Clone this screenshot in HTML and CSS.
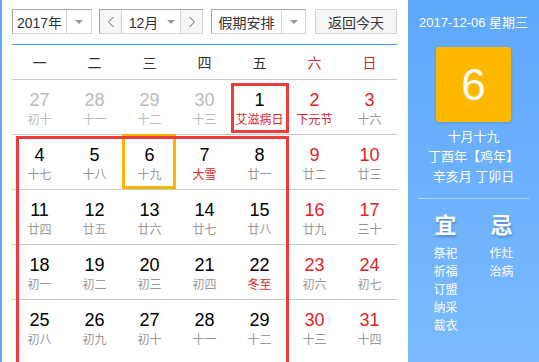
FILE: index.html
```html
<!DOCTYPE html>
<html lang="zh">
<head>
    <meta charset="UTF-8">
    <title>万年历</title>
    <link rel="stylesheet" href="styles.css">
</head>
<body>
    <div class="page">
        <div class="calendar">
            <div class="toolbar">
                <div class="select year-select">
                    <span class="select-text">2017年</span>
                    <span class="select-arrow"><i class="caret"></i></span>
                </div>
                <div class="select month-select">
                    <span class="nav-btn">
                        <svg width="8" height="12" viewBox="0 0 8 12"><path d="M6.5 1 L1.5 6 L6.5 11" fill="none" stroke="#666" stroke-width="1"/></svg>
                    </span>
                    <span class="select-text month-text">12月<i class="caret"></i></span>
                    <span class="nav-btn next">
                        <svg width="8" height="12" viewBox="0 0 8 12"><path d="M1.5 1 L6.5 6 L1.5 11" fill="none" stroke="#666" stroke-width="1"/></svg>
                    </span>
                </div>
                <div class="select holiday-select">
                    <span class="select-text">假期安排</span>
                    <span class="select-arrow"><i class="caret"></i></span>
                </div>
                <div class="today-btn">返回今天</div>
            </div>

            <div class="week-head">
                <span>一</span>
                <span>二</span>
                <span>三</span>
                <span>四</span>
                <span>五</span>
                <span class="weekend">六</span>
                <span class="weekend">日</span>
            </div>

            <div class="days" id="days"></div>

            <div class="mark mark-small"></div>
            <div class="mark mark-big"></div>
        </div>

        <aside class="today-panel">
            <div class="today-date">2017-12-06 星期三</div>
            <div class="today-num">6</div>
            <div class="today-lunar">
                <div>十月十九</div>
                <div>丁酉年【鸡年】</div>
                <div>辛亥月 丁卯日</div>
            </div>
            <div class="yiji">
                <div class="yiji-col">
                    <div class="yiji-title">宜</div>
                    <div>祭祀</div>
                    <div>祈福</div>
                    <div>订盟</div>
                    <div>纳采</div>
                    <div>裁衣</div>
                </div>
                <div class="yiji-col">
                    <div class="yiji-title">忌</div>
                    <div>作灶</div>
                    <div>治病</div>
                </div>
            </div>
        </aside>
    </div>

    <script>
        // 2017年12月 日历数据：[日期, 农历/节日, 是否本月, 是否节日]
        var days = [
            [27, '初十', false], [28, '十一', false], [29, '十二', false], [30, '十三', false],
            [1, '艾滋病日', true, true], [2, '下元节', true, true], [3, '十六', true],
            [4, '十七', true], [5, '十八', true], [6, '十九', true], [7, '大雪', true, true],
            [8, '廿一', true], [9, '廿二', true], [10, '廿三', true],
            [11, '廿四', true], [12, '廿五', true], [13, '廿六', true], [14, '廿七', true],
            [15, '廿八', true], [16, '廿九', true], [17, '三十', true],
            [18, '初一', true], [19, '初二', true], [20, '初三', true], [21, '初四', true],
            [22, '冬至', true, true], [23, '初六', true], [24, '初七', true],
            [25, '初八', true], [26, '初九', true], [27, '初十', true], [28, '十一', true],
            [29, '十二', true], [30, '十三', true], [31, '十四', true]
        ];

        var html = '';
        days.forEach(function (d, i) {
            var cls = 'day';
            if (!d[2]) cls += ' other';
            if (d[2] && i % 7 >= 5) cls += ' weekend';
            if (d[2] && d[0] === 6) cls += ' today';
            if (i >= 28) cls += ' last-row';
            html += '<div class="' + cls + '">' +
                '<div class="num">' + d[0] + '</div>' +
                '<div class="lunar' + (d[3] ? ' festival' : '') + '">' + d[1] + '</div>' +
                '</div>';
        });
        document.getElementById('days').innerHTML = html;
    </script>
</body>
</html>
```

FILE: styles.css
```css
body {
    margin: 0;
    font-family: "Liberation Sans", Arial, "Noto Sans CJK SC", sans-serif;
    background: #fff;
    color: #333;
    overflow: hidden;
}
.page {
    display: flex;
    height: 362px;
    border-left: 2px solid #5ea8fb;
}
.calendar {
    position: relative;
    width: 385px;
    margin-left: 10px;
    padding-top: 9px;
}
.toolbar {
    display: flex;
    height: 25px;
    font-size: 14px;
    color: #333;
}
.select {
    display: flex;
    box-sizing: border-box;
    height: 25px;
    border: 1px solid;
    border-color: #a6a6a6 #d4d4d4 #d4d4d4 #a6a6a6;
    background: #fff;
}
.select-text {
    flex: 1;
    display: flex;
    align-items: center;
    justify-content: center;
}
.select-arrow {
    display: flex;
    align-items: center;
    justify-content: center;
    border-left: 1px solid #d4d4d4;
}
.caret {
    display: inline-block;
    width: 0;
    height: 0;
    border-left: 4px solid transparent;
    border-right: 4px solid transparent;
    border-top: 4px solid #999;
}
.year-select {
    width: 80px;
}
.year-select .select-arrow {
    width: 24px;
}
.month-select {
    width: 104px;
    margin-left: 7px;
}
.nav-btn {
    width: 21px;
    display: flex;
    align-items: center;
    justify-content: center;
    background: #f6f6f6;
    border-right: 1px solid #d4d4d4;
}
.nav-btn.next {
    border-right: none;
    border-left: 1px solid #d4d4d4;
}
.month-text {
    gap: 9px;
    padding-left: 2px;
}
.holiday-select {
    width: 95px;
    margin-left: 8px;
}
.holiday-select .select-arrow {
    width: 23px;
}
.today-btn {
    box-sizing: border-box;
    width: 82px;
    height: 25px;
    margin-left: 9px;
    display: flex;
    align-items: center;
    justify-content: center;
    border: 1px solid #d4d4d4;
    background: #f5f5f5;
}
.week-head {
    display: grid;
    grid-template-columns: repeat(7, 55px);
    margin-top: 10px;
    height: 34px;
    border-top: 1px solid #4b97f2;
    border-bottom: 1px solid #cbcbcb;
    font-size: 14px;
    color: #333;
}
.week-head span {
    display: flex;
    align-items: center;
    justify-content: center;
}
.week-head .weekend {
    color: #e02424;
}
.days {
    display: grid;
    grid-template-columns: repeat(7, 55px);
}
.day {
    position: relative;
    height: 54px;
    border-bottom: 1px solid #cbcbcb;
    text-align: center;
}
.day.last-row {
    border-bottom: none;
}
.num {
    padding-top: 9px;
    font-size: 18px;
    line-height: 22px;
    color: #000;
}
.lunar {
    font-size: 12px;
    line-height: 18px;
    color: #999;
}
.lunar.festival {
    color: #e02424;
}
.day.weekend .num {
    color: #e02424;
}
.day.other .num,
.day.other .lunar {
    color: #bbb;
}
.day.today::after {
    content: "";
    position: absolute;
    top: -1px;
    left: 0;
    width: 48px;
    height: 49px;
    border: 3px solid #ffb400;
}
.mark {
    position: absolute;
    border: 3px solid #f23a3a;
    pointer-events: none;
}
.mark-small {
    left: 219px;
    top: 83px;
    width: 52px;
    height: 44px;
}
.mark-big {
    left: 4px;
    top: 136px;
    width: 267px;
    height: 230px;
}
.today-panel {
    width: 131px;
    margin-left: 11px;
    background: linear-gradient(#5ea8fb, #7bbafd);
    color: #fff;
    text-align: center;
}
.today-date {
    margin-top: 15px;
    font-size: 13px;
    line-height: 16px;
}
.today-num {
    width: 75px;
    height: 75px;
    margin: 16px auto 0;
    background: #ffb800;
    border-radius: 3px;
    box-shadow: 0 1px 3px rgba(0, 0, 0, 0.15);
    font-size: 44px;
    line-height: 75px;
}
.today-lunar {
    margin: 5px 10px 0;
    padding-bottom: 11px;
    border-bottom: 1px solid rgba(255, 255, 255, 0.45);
    font-size: 13px;
    line-height: 20px;
}
.yiji {
    display: flex;
    justify-content: center;
    gap: 30px;
    padding-top: 13px;
    font-size: 12px;
    line-height: 18px;
}
.yiji-col {
    width: 26px;
}
.yiji-title {
    font-size: 22px;
    line-height: 28px;
    font-weight: bold;
    margin-bottom: 5px;
    text-shadow: 1px 2px 2px rgba(20, 60, 140, 0.35);
}
```
